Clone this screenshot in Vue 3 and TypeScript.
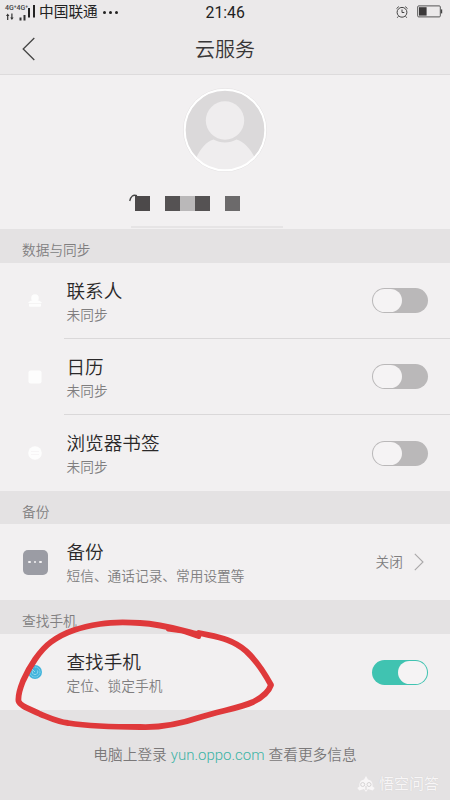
<script setup lang="ts">
import { ref } from 'vue'

interface SyncItem {
  id: 'contacts' | 'calendar' | 'bookmarks'
  title: string
  status: string
  enabled: boolean
}

const syncItems = ref<SyncItem[]>([
  { id: 'contacts', title: '联系人', status: '未同步', enabled: false },
  { id: 'calendar', title: '日历', status: '未同步', enabled: false },
  { id: 'bookmarks', title: '浏览器书签', status: '未同步', enabled: false },
])
const findPhone = ref(true)
</script>

<template>
  <div class="screen">
    <header class="top">
      <div class="status">
        <div class="carrier">
          <div class="net">
            <span class="net-label">4G⁺4G⁺</span>
            <svg class="signal" width="26" height="10" viewBox="0 0 26 10">
              <path d="M0 4l1.700-2.500L3.400 4H2.300v4H1.100V4zM4.200 5.500h1.100v-4h1.200v4h1.100L5.900 8zM13.500 5.500h2v3h-2zM17.500 3h2v5.500h-2z" fill="#333" />
            </svg>
          </div>
          <svg class="bars" width="8" height="14" viewBox="0 0 8 14">
            <path d="M0 3h2v9.500H0zM5 0h2v12.500H5z" fill="#222" />
          </svg>
          <span class="operator">中国联通</span>
          <span class="more"><i></i><i></i><i></i></span>
        </div>
        <span class="time">21:46</span>
        <div class="indicators">
          <svg width="14" height="14" viewBox="0 0 14 14" fill="none" stroke="#444" stroke-width="1">
            <circle cx="7" cy="7.300" r="4.900" />
            <path d="M7 4.500v3h2.300M1.500 3.600l2.300-2M12.500 3.600l-2.300-2M3.400 11.300l-1.100 1.400M10.600 11.300l1.100 1.400" />
          </svg>
          <svg width="26" height="13" viewBox="0 0 26 13">
            <rect x=".7" y=".9" width="22.600" height="11" rx="1" fill="none" stroke="#555" />
            <rect x="2" y="2.200" width="7.600" height="8.400" fill="#3b393a" />
            <path d="M23.800 4.400h1.400v4h-1.400z" fill="#444" />
          </svg>
        </div>
      </div>
      <nav class="nav">
        <button class="back" aria-label="返回">
          <svg width="14" height="24" viewBox="0 0 14 24">
            <path d="M12.300 1L1.200 12l11.100 11" fill="none" stroke="#444" stroke-width="1.300" />
          </svg>
        </button>
        <h1>云服务</h1>
      </nav>
    </header>

    <section class="profile">
      <svg class="avatar" width="84" height="84" viewBox="0 0 84 84">
        <defs><clipPath id="avatar-clip"><circle cx="42" cy="42" r="40" /></clipPath></defs>
        <circle cx="42" cy="42" r="41.500" fill="#fff" stroke="#e2e0e1" stroke-width=".8" />
        <g clip-path="url(#avatar-clip)">
          <path d="M0 0h84v84H0z" fill="#dbd9da" />
          <path d="M13 70C18 60 23 54 30.500 51.500c7 4 16 4 23 0C61 54 67 60 72 70l-5 14H18z" fill="#efedee" />
          <circle cx="42" cy="32.500" r="19.200" fill="#efedee" />
        </g>
        <circle cx="42" cy="42" r="40.300" fill="none" stroke="#fff" stroke-width="1.900" />
      </svg>
      <svg class="account" width="112" height="18" viewBox="0 0 112 18">
        <path d="M.7 7C2 2 4 .5 8 1.600" fill="none" stroke="#444" stroke-width="1.300" />
        <path d="M6 2h15v15H6z" fill="#4c494a" />
        <path d="M36 2h15v15H36zM66 2h15v15H66z" fill="#555253" />
        <path d="M51 2h15v15H51z" fill="#bab8b9" />
        <path d="M96 2h15v15H96z" fill="#6c6a6b" />
      </svg>
      <div class="profile-edge"></div>
    </section>

    <h2 class="section-title">数据与同步</h2>
    <section class="group">
      <div v-for="item in syncItems" :key="item.id" class="row">
        <div class="icon">
          <svg width="16" height="16" viewBox="0 0 16 16" fill="#fdfdfd">
            <template v-if="item.id === 'contacts'">
              <circle cx="8" cy="5" r="3.800" />
              <path d="M1 10C3 6 13 6 15 10zM2 10.800h12v2q0 1-1 1H3q-1 0-1-1z" />
            </template>
            <rect v-else-if="item.id === 'calendar'" x="1.500" y="1.500" width="13" height="13" rx="2" />
            <template v-else>
              <circle cx="8" cy="8" r="6.800" />
              <path d="M4 6.500h8M4 9.500h8" stroke="#f7f5f6" />
            </template>
          </svg>
        </div>
        <div class="content">
          <div class="text">
            <p class="title">{{ item.title }}</p>
            <p class="sub">{{ item.status }}</p>
          </div>
          <button class="switch" :class="{ on: item.enabled }" role="switch" :aria-checked="item.enabled" @click="item.enabled = !item.enabled">
            <span class="knob"></span>
          </button>
        </div>
      </div>
    </section>

    <h2 class="section-title">备份</h2>
    <section class="group">
      <div class="row">
        <div class="icon"><span class="backup"><i></i><i></i><i></i></span></div>
        <div class="content">
          <div class="text">
            <p class="title">备份</p>
            <p class="sub">短信、通话记录、常用设置等</p>
          </div>
          <div class="link">
            <span>关闭</span>
            <svg width="10" height="18" viewBox="0 0 10 18">
              <path d="M.8.800L9 9 .8 17.200" fill="none" stroke="#aaa8a9" stroke-width="1.100" />
            </svg>
          </div>
        </div>
      </div>
    </section>

    <div class="find">
      <h2 class="section-title">查找手机</h2>
      <section class="group">
        <div class="row">
          <div class="icon">
            <svg width="16" height="16" viewBox="0 0 16 16">
              <circle cx="8" cy="8" r="7" fill="#42b4dc" />
              <g fill="none" stroke="#a5def0" stroke-width=".8">
                <circle cx="8" cy="8" r="5" stroke-dasharray="1.500 .8" />
                <path d="M5.500 6.500a2.800 2.800 0 1 0 5 0M8 8L4.500 4.500" />
              </g>
            </svg>
          </div>
          <div class="content">
            <div class="text">
              <p class="title">查找手机</p>
              <p class="sub">定位、锁定手机</p>
            </div>
            <button class="switch" :class="{ on: findPhone }" role="switch" :aria-checked="findPhone" @click="findPhone = !findPhone">
              <span class="knob"></span>
            </button>
          </div>
        </div>
      </section>
      <svg class="marker" width="270" height="120" viewBox="10 615 270 120">
        <g fill="none" stroke="#df393b" stroke-linecap="round" stroke-linejoin="round">
          <path stroke-width="5.800" d="M199 634.500C180 630 162 624 140 623C125 622 112 622 100 624C82 627 66 631 51 642C40 650 29 667 23 681C19 691 18 696 18.500 701C20 706 30 709 40 714C50 718 58 722 68 723C88 726 112 727 140 727C162 728 180 724 201 717C220 711 240 708 253 702C263 697 269 691 271 685C265 674 257 661 246 651C231 638 216 637 199 633" />
          <path stroke-width="4" d="M168 629.500L183 631.500L199 637" />
        </g>
      </svg>
    </div>

    <footer class="footer">
      <p class="hint"><span>电脑上登录</span><a>yun.oppo.com</a><span>查看更多信息</span></p>
      <div class="watermark">
        <svg width="18" height="17" viewBox="0 0 18 17">
          <path d="M9 0l2 3.500c4 1 5 4 4.500 7l2.200 1.500-2 2.500L11 13l-2 3-2-3-4.700 1.500-2-2.500 2.200-1.500C2 7.500 3 4.500 7 3.500z" fill="#f8f6f7" />
          <g fill="none" stroke="#d6d4d5"><circle cx="5.700" cy="8.500" r="2" /><circle cx="12" cy="8.500" r="2" /><path d="M9 10v4" /></g>
        </svg>
        <span>悟空问答</span>
      </div>
    </footer>
  </div>
</template>

<style>
body {
  margin: 0;
}
</style>

<style scoped>
.screen {
  display: flex;
  flex-direction: column;
  width: 450px;
  height: 800px;
  overflow: hidden;
  background: #e4e2e3;
  color: #353334;
  font-family: Roboto, "Noto Sans CJK SC", sans-serif;
  font-weight: 350;
}

h1,
h2,
p {
  margin: 0;
  font-weight: inherit;
}

button {
  padding: 0;
  border: 0;
  background: none;
}

svg {
  display: block;
}

.top {
  box-sizing: border-box;
  height: 75px;
  border-bottom: 1px solid #dddbdc;
  background: #ebe9ea;
}

.status {
  display: grid;
  grid-template-columns: 205.500px auto 1fr;
  align-items: center;
  box-sizing: border-box;
  height: 24px;
  padding: 0 7px 0 0;
}

.carrier {
  display: flex;
  align-items: center;
  padding-left: 5px;
}

.net {
  width: 23px;
  height: 17px;
}

.net-label {
  display: block;
  height: 8px;
  font: 500 7px/8px Roboto, sans-serif;
  white-space: nowrap;
  color: #444;
}

.signal {
  margin-left: 1px;
}

.bars {
  margin: 0 3px 0 0;
}

.operator {
  font-size: 14.700px;
  font-weight: 400;
  line-height: 20px;
  color: #222;
}

.more {
  display: flex;
  gap: 3px;
  margin-left: 5px;
}

.more i {
  width: 3px;
  height: 3px;
  border-radius: 50%;
  background: #222;
}

.time {
  padding-top: 1px;
  font-size: 15.800px;
  font-weight: 400;
  line-height: 23px;
  color: #222;
}

.indicators {
  display: flex;
  justify-content: flex-end;
  align-items: center;
  gap: 8px;
  padding-bottom: 1px;
}

.nav {
  display: grid;
  grid-template-columns: 60px 1fr 60px;
  align-items: center;
  height: 50px;
}

.back {
  justify-self: start;
  margin-left: 22px;
}

.nav h1 {
  padding-top: 1px;
  font-size: 20px;
  line-height: 28px;
  text-align: center;
  color: #383637;
}

.profile {
  display: flex;
  flex-direction: column;
  align-items: center;
  height: 154px;
  background: #f2f0f1;
}

.avatar {
  margin-top: 13px;
}

.account {
  margin: 22px 0 0 -81px;
}

.profile-edge {
  width: 152px;
  height: 2px;
  margin: 14px 0 0 -36px;
  background: #e6e4e5;
}

.section-title {
  box-sizing: border-box;
  height: 34px;
  padding: 10px 22px 0;
  font-size: 13.700px;
  line-height: 22px;
  color: #807e7f;
}

.group {
  background: #f2f0f1;
}

.group + .section-title {
  height: 33px;
}

.row {
  display: flex;
  height: 76px;
}

.icon {
  display: flex;
  align-items: center;
  justify-content: center;
  width: 26px;
  padding: 0 16px 0 22px;
}

.content {
  display: flex;
  flex: 1;
  align-items: center;
  justify-content: space-between;
  padding: 0 22px 0 2.500px;
  border-bottom: 1px solid #dad8d9;
}

.row:last-child .content {
  border-bottom: 0;
}

.text {
  padding-top: 2px;
}

.title {
  font-size: 18.600px;
  line-height: 26px;
  color: #2a2829;
}

.sub {
  font-size: 13.700px;
  line-height: 20px;
  color: #807e7f;
}

.switch {
  box-sizing: border-box;
  display: flex;
  width: 56px;
  height: 25px;
  padding: 1px;
  border-radius: 13px;
  background: #bab8b9;
}

.knob {
  width: 29px;
  height: 23px;
  border-radius: 12px;
  background: #f5f3f4;
}

.switch.on {
  justify-content: flex-end;
  background: #40c3b1;
}

.backup {
  display: flex;
  align-items: center;
  justify-content: center;
  gap: 3px;
  width: 25px;
  height: 25px;
  border-radius: 5px;
  background: #9b9ca4;
}

.backup i {
  width: 2.500px;
  height: 2.500px;
  border-radius: 50%;
  background: #f5f3f4;
}

.link {
  display: flex;
  align-items: center;
  gap: 11px;
  margin-right: 4px;
  font-size: 13.700px;
  line-height: 20px;
  color: #807e7f;
}

.find {
  position: relative;
}

.marker {
  position: absolute;
  left: 10px;
  top: 15px;
  pointer-events: none;
}

.footer {
  padding-top: 34px;
}

.hint {
  display: flex;
  justify-content: center;
  gap: 4px;
  font-size: 14.700px;
  line-height: 22px;
  color: #7a7879;
}

.hint a {
  font-size: 15px;
  color: #3cb3a5;
}

.watermark {
  display: flex;
  align-items: center;
  gap: 4px;
  margin: 8px 0 0 357px;
  font-size: 15px;
  font-weight: 400;
  line-height: 20px;
  color: #f8f6f7;
  text-shadow: 0 0 1px #c8c6c7;
}
</style>
